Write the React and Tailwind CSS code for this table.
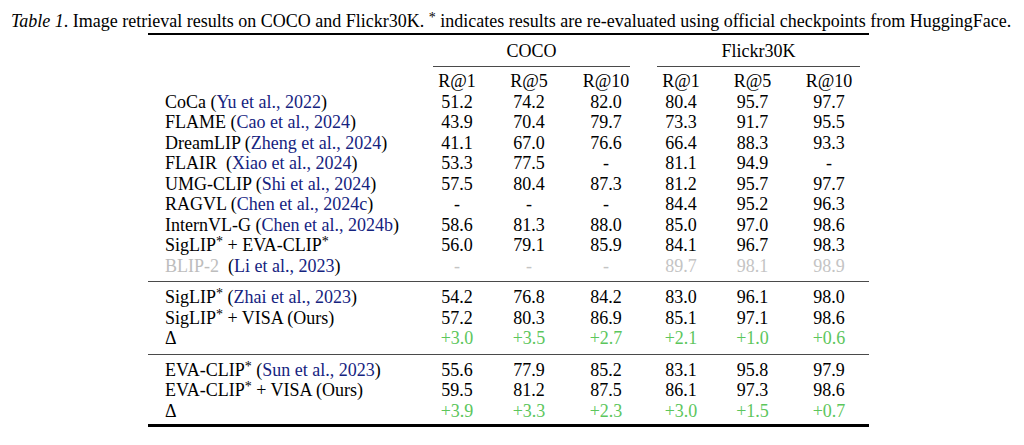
import React from "react";

const cols = "grid grid-cols-[274px_70px_74px_80px_70px_73px_80px]";

const groupA = [
  { name: "CoCa", cite: "Yu et al., 2022", vals: ["51.2", "74.2", "82.0", "80.4", "95.7", "97.7"] },
  { name: "FLAME", cite: "Cao et al., 2024", vals: ["43.9", "70.4", "79.7", "73.3", "91.7", "95.5"] },
  { name: "DreamLIP", cite: "Zheng et al., 2024", vals: ["41.1", "67.0", "76.6", "66.4", "88.3", "93.3"] },
  { name: "FLAIR", cite: "Xiao et al., 2024", wide: true, vals: ["53.3", "77.5", "-", "81.1", "94.9", "-"] },
  { name: "UMG-CLIP", cite: "Shi et al., 2024", vals: ["57.5", "80.4", "87.3", "81.2", "95.7", "97.7"] },
  { name: "RAGVL", cite: "Chen et al., 2024c", vals: ["-", "-", "-", "84.4", "95.2", "96.3"] },
  { name: "InternVL-G", cite: "Chen et al., 2024b", vals: ["58.6", "81.3", "88.0", "85.0", "97.0", "98.6"] },
];

const Star = () => <sup className="text-[14px] top-[-0.35em]">*</sup>;

const Cite = ({ children }) => (
  <>
    (<span className="text-[#15237f]">{children}</span>)
  </>
);

const Row = ({ label, vals, tone = "text-black" }) => (
  <div className={`${cols} leading-[20.5px]`}>
    <div className="pl-[17px] whitespace-nowrap">{label}</div>
    {vals.map((v, i) => (
      <div key={i} className={`text-center ${tone}`}>
        {v}
      </div>
    ))}
  </div>
);

const Rule = () => <div className="my-[5px] h-px bg-[#4a4a4a]" />;

export default function App() {
  return (
    <div className="bg-white w-[1024px] h-[445px] overflow-hidden font-['Liberation_Serif',serif] text-[18px] text-black">
      <p className="pl-[11px] pt-[11px] whitespace-nowrap leading-[20.5px]">
        <i>Table 1</i>. Image retrieval results on COCO and Flickr30K. <Star /> indicates results are re-evaluated using
        official checkpoints from HuggingFace.
      </p>

      <div className="pl-[148px]">
        <div className="w-[721px]">
          <div className="h-[2px] bg-black mt-[1px]" />

          {/* group headers */}
          <div className={`${cols} leading-[20.5px] mt-[6px]`}>
            <div />
            <div className="col-span-3 pl-[11px] pr-[16px]">
              <div className="text-center">COCO</div>
              <div className="mt-[5px] h-px bg-[#4a4a4a]" />
            </div>
            <div className="col-span-3 pl-[11px] pr-[9px]">
              <div className="text-center">Flickr30K</div>
              <div className="mt-[5px] h-px bg-[#4a4a4a]" />
            </div>
          </div>

          <div className="mt-[4px]">
            <Row label="" vals={["R@1", "R@5", "R@10", "R@1", "R@5", "R@10"]} />
          </div>

          {groupA.map((r) => (
            <Row
              key={r.name}
              label={
                <>
                  {r.name}
                  {r.wide ? "\u00a0 " : " "}
                  <Cite>{r.cite}</Cite>
                </>
              }
              vals={r.vals}
            />
          ))}
          <Row
            label={
              <>
                SigLIP<Star /> + EVA-CLIP<Star />
              </>
            }
            vals={["56.0", "79.1", "85.9", "84.1", "96.7", "98.3"]}
          />
          <Row
            label={
              <>
                <span className="text-[#bdbdbd]">BLIP-2</span>
                {"\u00a0 "}
                <Cite>Li et al., 2023</Cite>
              </>
            }
            vals={["-", "-", "-", "89.7", "98.1", "98.9"]}
            tone="text-[#c4c4c4]"
          />

          <Rule />

          <Row
            label={
              <>
                SigLIP<Star /> <Cite>Zhai et al., 2023</Cite>
              </>
            }
            vals={["54.2", "76.8", "84.2", "83.0", "96.1", "98.0"]}
          />
          <Row
            label={
              <>
                SigLIP<Star /> + VISA (Ours)
              </>
            }
            vals={["57.2", "80.3", "86.9", "85.1", "97.1", "98.6"]}
          />
          <Row label="Δ" vals={["+3.0", "+3.5", "+2.7", "+2.1", "+1.0", "+0.6"]} tone="text-[#5cc65c]" />

          <Rule />

          <Row
            label={
              <>
                EVA-CLIP<Star /> <Cite>Sun et al., 2023</Cite>
              </>
            }
            vals={["55.6", "77.9", "85.2", "83.1", "95.8", "97.9"]}
          />
          <Row
            label={
              <>
                EVA-CLIP<Star /> + VISA (Ours)
              </>
            }
            vals={["59.5", "81.2", "87.5", "86.1", "97.3", "98.6"]}
          />
          <Row label="Δ" vals={["+3.9", "+3.3", "+2.3", "+3.0", "+1.5", "+0.7"]} tone="text-[#5cc65c]" />

          <div className="mt-[3px] h-[3px] bg-black" />
        </div>
      </div>
    </div>
  );
}
